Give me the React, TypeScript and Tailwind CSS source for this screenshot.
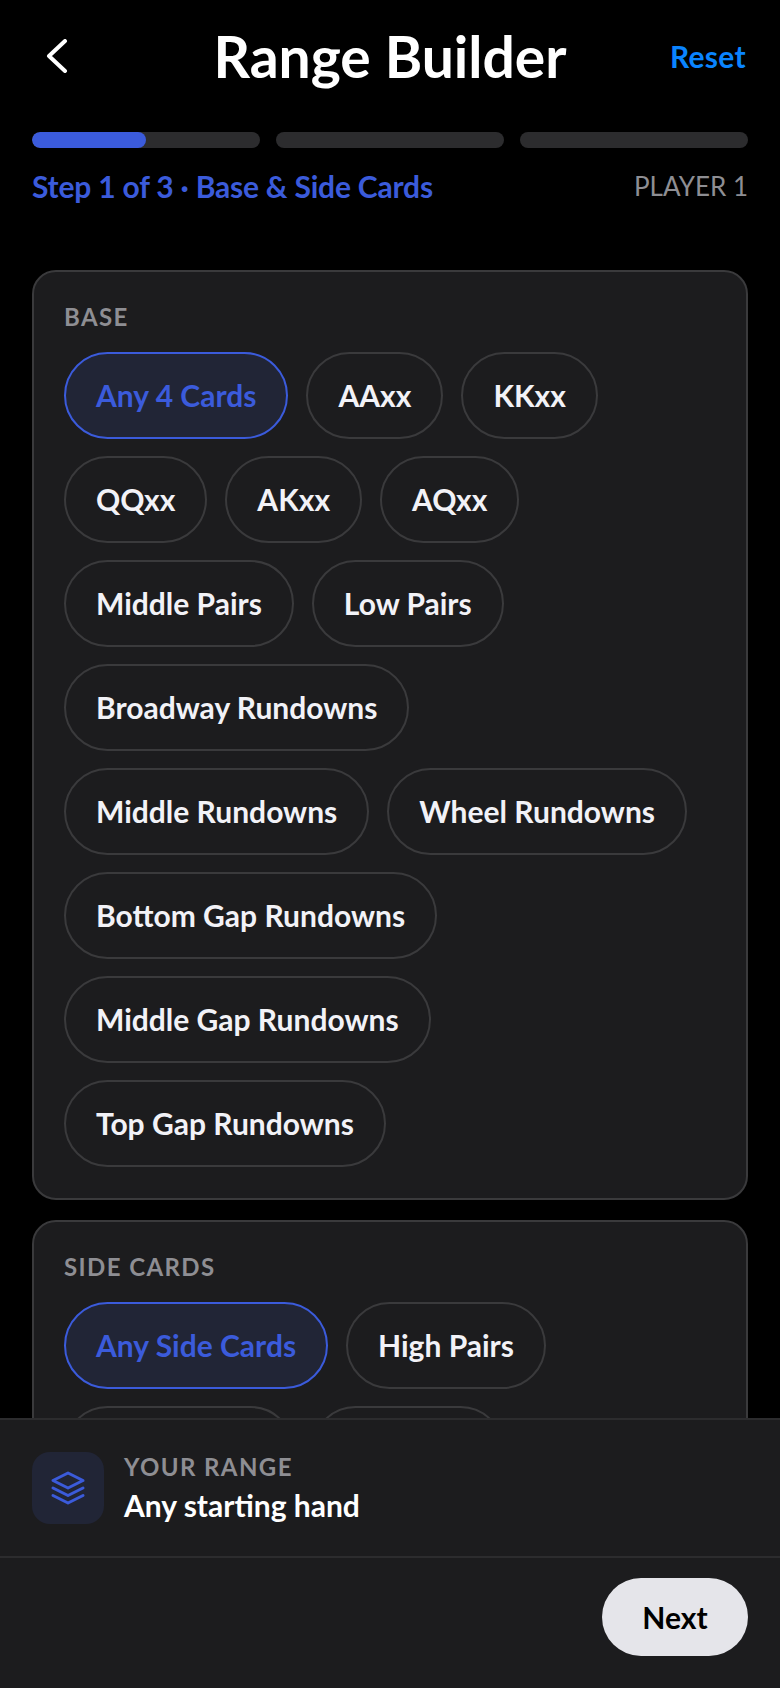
import React from "react";

const BASE_OPTIONS = [
  "Any 4 Cards",
  "AAxx",
  "KKxx",
  "QQxx",
  "AKxx",
  "AQxx",
  "Middle Pairs",
  "Low Pairs",
  "Broadway Rundowns",
  "Middle Rundowns",
  "Wheel Rundowns",
  "Bottom Gap Rundowns",
  "Middle Gap Rundowns",
  "Top Gap Rundowns",
];

const SIDE_OPTIONS = ["Any Side Cards", "High Pairs", "Middle Pairs", "Low Pairs"];

function Chip({ label, active }: { label: string; active?: boolean }) {
  return (
    <button
      type="button"
      className={
        active
          ? "h-[87px] px-[30px] rounded-full border-2 border-[#3b5bdb] bg-[#212536] text-[30px] font-bold text-[#3b5bdb]"
          : "h-[87px] px-[30px] rounded-full border-2 border-[#3a3a3c] text-[30px] font-bold text-[#f2f2f7]"
      }
    >
      {label}
    </button>
  );
}

function Section({ title, options }: { title: string; options: string[] }) {
  return (
    <section className="rounded-[24px] border-2 border-[#3a3a3c] bg-[#1c1c1e] px-[30px] pt-[30px] pb-[31px]">
      <h2 className="text-[24px] leading-[30px] font-bold tracking-[1.4px] text-[#8e8e93]">{title}</h2>
      <div className="mt-[20px] flex flex-wrap gap-x-[18px] gap-y-[17px]">
        {options.map((o, i) => (
          <Chip key={o} label={o} active={i === 0} />
        ))}
      </div>
    </section>
  );
}

export default function App() {
  return (
    <div className="h-[1688px] w-[780px] flex flex-col overflow-hidden bg-black font-['Lato','Noto_Sans',sans-serif]">
      <header className="px-8 pt-[24px] grid grid-cols-[1fr_auto_1fr] items-center h-[88px]">
        <button type="button" className="justify-self-start pl-[14px]">
          <svg width="22" height="34" viewBox="0 0 22 34" fill="none" stroke="#ffffff" strokeWidth="4" strokeLinecap="round" strokeLinejoin="round">
            <path d="M19 2 L3 17 L19 32" />
          </svg>
        </button>
        <h1 className="text-[57px] leading-[64px] font-bold text-white">Range Builder</h1>
        <button type="button" className="justify-self-end pr-[2px] text-[30px] font-bold tracking-[0.3px] text-[#0a84ff]">Reset</button>
      </header>

      <div className="px-8 mt-[44px]">
        <div className="flex gap-4">
          <div className="flex-1 h-4 rounded-full bg-[#2c2c2e] overflow-hidden">
            <div className="h-full w-1/2 rounded-full bg-[#3b5bdb]" />
          </div>
          <div className="flex-1 h-4 rounded-full bg-[#2c2c2e]" />
          <div className="flex-1 h-4 rounded-full bg-[#2c2c2e]" />
        </div>
        <div className="mt-[21px] flex items-center justify-between">
          <span className="text-[30px] leading-[34px] font-bold tracking-[-0.2px] text-[#3b5bdb]">Step 1 of 3 · Base &amp; Side Cards</span>
          <span className="text-[26px] leading-[34px] text-[#8e8e93]">PLAYER 1</span>
        </div>
      </div>

      <main className="flex-1 min-h-0 overflow-hidden px-8 pt-[67px] flex flex-col gap-[20px]">
        <Section title="BASE" options={BASE_OPTIONS} />
        <Section title="SIDE CARDS" options={SIDE_OPTIONS} />
      </main>

      <footer className="bg-[#1c1c1e]">
        <div className="h-[140px] border-t-2 border-b-2 border-[#2c2c2e] px-8 flex items-center gap-[20px]">
          <div className="w-[72px] h-[72px] rounded-[18px] bg-[#212536] flex items-center justify-center">
            <svg width="36" height="36" viewBox="0 0 36 36" fill="none" stroke="#3b5bdb" strokeWidth="3" strokeLinecap="round" strokeLinejoin="round">
              <path d="M18 3 L33 10.5 L18 18 L3 10.5 Z" />
              <path d="M3 18 L18 25.5 L33 18" />
              <path d="M3 25.5 L18 33 L33 25.5" />
            </svg>
          </div>
          <div>
            <div className="text-[24px] leading-[30px] font-bold tracking-[1.4px] text-[#8e8e93]">YOUR RANGE</div>
            <div className="mt-[4px] text-[30px] leading-[38px] font-bold text-white">Any starting hand</div>
          </div>
        </div>
        <div className="h-[130px] px-8 pt-[20px] flex justify-end">
          <button type="button" className="h-[78px] w-[146px] rounded-full bg-[#e5e5ea] text-[30px] font-bold text-black">Next</button>
        </div>
      </footer>
    </div>
  );
}
